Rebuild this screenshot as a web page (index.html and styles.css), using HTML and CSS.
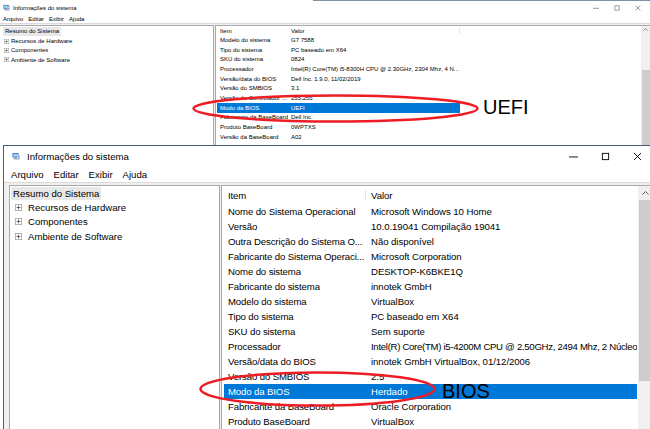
FILE: index.html
```html
<!DOCTYPE html>
<html lang="pt-BR">
<head>
<meta charset="utf-8">
<title>Informações do sistema</title>
<link rel="stylesheet" href="styles.css">
</head>
<body>
<div class="stage">

  <section class="win win-back">
    <header class="titlebar">
      <svg class="appicon" viewBox="0 0 16 16"><rect x="1" y="2" width="12" height="9" fill="#2e6bc0"/><rect x="2.5" y="3.5" width="9" height="6" fill="#9dd0f5"/><rect x="5" y="11" width="4" height="2" fill="#6a7c8f"/><rect x="3" y="13" width="8" height="1.5" fill="#6a7c8f"/><rect x="10" y="6" width="5" height="9" fill="#e9eef4" stroke="#7a8ca0" stroke-width=".8"/><rect x="12" y="8" width="1.2" height="5" fill="#2e6bc0"/></svg>
      <span class="title">Informações do sistema</span>
      <div class="controls">
        <span class="ctl"><svg viewBox="0 0 10 10"><path d="M0 5.5h10" stroke="#555" stroke-width="1"/></svg></span>
        <span class="ctl"><svg viewBox="0 0 10 10"><rect x="1.5" y="1.5" width="7" height="7" fill="none" stroke="#555" stroke-width="1"/></svg></span>
        <span class="ctl"><svg viewBox="0 0 10 10"><path d="M1 1l8 8M9 1l-8 8" stroke="#555" stroke-width="1"/></svg></span>
      </div>
    </header>
    <nav class="menubar"><span>Arquivo</span><span>Editar</span><span>Exibir</span><span>Ajuda</span></nav>
    <div class="sep"></div>
    <div class="body">
      <aside class="tree">
        <div class="node root"><span class="label">Resumo do Sistema</span></div>
        <div class="node"><svg class="exp" viewBox="0 0 9 9"><rect x=".5" y=".5" width="8" height="8" fill="#fff" stroke="#a0a0a0"/><path d="M2 4.5h5M4.5 2v5" stroke="#444"/></svg><span class="label">Recursos de Hardware</span></div>
        <div class="node"><svg class="exp" viewBox="0 0 9 9"><rect x=".5" y=".5" width="8" height="8" fill="#fff" stroke="#a0a0a0"/><path d="M2 4.5h5M4.5 2v5" stroke="#444"/></svg><span class="label">Componentes</span></div>
        <div class="node"><svg class="exp" viewBox="0 0 9 9"><rect x=".5" y=".5" width="8" height="8" fill="#fff" stroke="#a0a0a0"/><path d="M2 4.5h5M4.5 2v5" stroke="#444"/></svg><span class="label">Ambiente de Software</span></div>
      </aside>
      <div class="pane">
        <div class="list">
          <div class="row head"><span class="c1">Item</span><span class="c2">Valor</span></div>
          <div class="row"><span class="c1">Modelo do sistema</span><span class="c2">G7 7588</span></div>
          <div class="row"><span class="c1">Tipo do sistema</span><span class="c2">PC baseado em X64</span></div>
          <div class="row"><span class="c1">SKU do sistema</span><span class="c2">0824</span></div>
          <div class="row"><span class="c1">Processador</span><span class="c2">Intel(R) Core(TM) i5-8300H CPU @ 2.30GHz, 2304 Mhz, 4 N...</span></div>
          <div class="row"><span class="c1">Versão/data do BIOS</span><span class="c2">Dell Inc. 1.9.0, 11/02/2019</span></div>
          <div class="row"><span class="c1">Versão do SMBIOS</span><span class="c2">3.1</span></div>
          <div class="row"><span class="c1">Versão do Controlador ...</span><span class="c2">255.255</span></div>
          <div class="row sel"><span class="c1">Modo da BIOS</span><span class="c2">UEFI</span></div>
          <div class="row"><span class="c1">Fabricante da BaseBoard</span><span class="c2">Dell Inc.</span></div>
          <div class="row"><span class="c1">Produto BaseBoard</span><span class="c2">0WPTXS</span></div>
          <div class="row"><span class="c1">Versão da BaseBoard</span><span class="c2">A02</span></div>
        </div>
        <div class="scrollbar">
          <div class="arrow"><svg viewBox="0 0 7 4"><path d="M.5 3.5l3-3 3 3" fill="none" stroke="#606060" stroke-width="1"/></svg></div>
          <div class="track"><div class="thumb"></div></div>
        </div>
      </div>
    </div>
  </section>

  <section class="win win-front">
    <header class="titlebar">
      <svg class="appicon" viewBox="0 0 16 16"><rect x="1" y="2" width="12" height="9" fill="#2e6bc0"/><rect x="2.5" y="3.5" width="9" height="6" fill="#9dd0f5"/><rect x="5" y="11" width="4" height="2" fill="#6a7c8f"/><rect x="3" y="13" width="8" height="1.5" fill="#6a7c8f"/><rect x="10" y="6" width="5" height="9" fill="#e9eef4" stroke="#7a8ca0" stroke-width=".8"/><rect x="12" y="8" width="1.2" height="5" fill="#2e6bc0"/></svg>
      <span class="title">Informações do sistema</span>
      <div class="controls">
        <span class="ctl"><svg viewBox="0 0 10 10"><path d="M0 5.5h10" stroke="#000" stroke-width="1"/></svg></span>
        <span class="ctl"><svg viewBox="0 0 10 10"><rect x="1.5" y="1.5" width="7" height="7" fill="none" stroke="#000" stroke-width="1"/></svg></span>
        <span class="ctl"><svg viewBox="0 0 10 10"><path d="M1 1l8 8M9 1l-8 8" stroke="#000" stroke-width="1"/></svg></span>
      </div>
    </header>
    <nav class="menubar"><span>Arquivo</span><span>Editar</span><span>Exibir</span><span>Ajuda</span></nav>
    <div class="sep"></div>
    <div class="body">
      <aside class="tree">
        <div class="node root"><span class="label">Resumo do Sistema</span></div>
        <div class="node"><svg class="exp" viewBox="0 0 9 9"><rect x=".5" y=".5" width="8" height="8" fill="#fff" stroke="#a0a0a0"/><path d="M2 4.5h5M4.5 2v5" stroke="#444"/></svg><span class="label">Recursos de Hardware</span></div>
        <div class="node"><svg class="exp" viewBox="0 0 9 9"><rect x=".5" y=".5" width="8" height="8" fill="#fff" stroke="#a0a0a0"/><path d="M2 4.5h5M4.5 2v5" stroke="#444"/></svg><span class="label">Componentes</span></div>
        <div class="node"><svg class="exp" viewBox="0 0 9 9"><rect x=".5" y=".5" width="8" height="8" fill="#fff" stroke="#a0a0a0"/><path d="M2 4.5h5M4.5 2v5" stroke="#444"/></svg><span class="label">Ambiente de Software</span></div>
      </aside>
      <div class="pane">
        <div class="list">
          <div class="row head"><span class="c1">Item</span><span class="c2">Valor</span></div>
          <div class="row"><span class="c1">Nome do Sistema Operacional</span><span class="c2">Microsoft Windows 10 Home</span></div>
          <div class="row"><span class="c1">Versão</span><span class="c2">10.0.19041 Compilação 19041</span></div>
          <div class="row"><span class="c1">Outra Descrição do Sistema O...</span><span class="c2">Não disponível</span></div>
          <div class="row"><span class="c1">Fabricante do Sistema Operaci...</span><span class="c2">Microsoft Corporation</span></div>
          <div class="row"><span class="c1">Nome do sistema</span><span class="c2">DESKTOP-K6BKE1Q</span></div>
          <div class="row"><span class="c1">Fabricante do sistema</span><span class="c2">innotek GmbH</span></div>
          <div class="row"><span class="c1">Modelo do sistema</span><span class="c2">VirtualBox</span></div>
          <div class="row"><span class="c1">Tipo do sistema</span><span class="c2">PC baseado em X64</span></div>
          <div class="row"><span class="c1">SKU do sistema</span><span class="c2">Sem suporte</span></div>
          <div class="row"><span class="c1">Processador</span><span class="c2 long">Intel(R) Core(TM) i5-4200M CPU @ 2.50GHz, 2494 Mhz, 2 Núcleo</span></div>
          <div class="row"><span class="c1">Versão/data do BIOS</span><span class="c2">innotek GmbH VirtualBox, 01/12/2006</span></div>
          <div class="row"><span class="c1">Versão do SMBIOS</span><span class="c2">2.5</span></div>
          <div class="row sel"><span class="c1">Modo da BIOS</span><span class="c2">Herdado</span></div>
          <div class="row"><span class="c1">Fabricante da BaseBoard</span><span class="c2">Oracle Corporation</span></div>
          <div class="row"><span class="c1">Produto BaseBoard</span><span class="c2">VirtualBox</span></div>
        </div>
        <div class="scrollbar">
          <div class="arrow"><svg viewBox="0 0 7 4"><path d="M.5 3.5l3-3 3 3" fill="none" stroke="#606060" stroke-width="1"/></svg></div>
          <div class="track"><div class="thumb"></div></div>
        </div>
      </div>
    </div>
  </section>

  <svg class="annot" viewBox="0 0 650 429">
    <ellipse cx="335.5" cy="108.5" rx="142" ry="13" fill="none" stroke="#ee1c24" stroke-width="2.5"/>
    <ellipse cx="317.5" cy="389" rx="117" ry="16.5" fill="none" stroke="#ee1c24" stroke-width="2.5"/>
  </svg>
  <span class="tag tag-uefi">UEFI</span>
  <span class="tag tag-bios">BIOS</span>
</div>
</body>
</html>
```

FILE: styles.css
```css
* { box-sizing: border-box; margin: 0; padding: 0; }

body {
  margin: 0;
  width: 650px;
  height: 429px;
  overflow: hidden;
  background: #fff;
  font-family: "Liberation Sans", Arial, sans-serif;
  color: #000;
}

.stage {
  position: relative;
  width: 650px;
  height: 429px;
  overflow: hidden;
}

/* ---------- generic window ---------- */
.win {
  position: absolute;
  display: flex;
  flex-direction: column;
  background: #f0f0f0;
  overflow: hidden;
}
.titlebar {
  display: flex;
  align-items: center;
  background: #fff;
  flex: none;
}
.appicon { flex: none; display: block; }
.title { white-space: nowrap; }
.controls { margin-left: auto; display: flex; height: 100%; }
.ctl { display: flex; align-items: center; justify-content: center; height: 100%; }
.ctl svg { display: block; }
.menubar {
  display: flex;
  align-items: center;
  background: #fff;
  flex: none;
  white-space: nowrap;
}
.sep { flex: none; border-top: 1px solid #dadada; background: #f0f0f0; }
.body { flex: 1; display: flex; min-height: 0; }
.tree {
  flex: none;
  background: #fff;
  border: 1px solid #a9a9a9;
  white-space: nowrap;
}
.node { display: flex; align-items: center; }
.root .label { background: #e8e8e8; }
.exp { flex: none; display: block; }
.pane {
  flex: 1;
  display: flex;
  min-width: 0;
  background: #fff;
  border-left: 1px solid #a9a9a9;
  border-top: 1px solid #a9a9a9;
}
.list { flex: 1; min-width: 0; overflow: hidden; }
.row { display: flex; white-space: nowrap; }
.row .c1, .row .c2 { overflow: hidden; flex: none; }
.row .c2 { flex: 1; }
.row.sel { background: #0078d7; color: #fff; }
.scrollbar { flex: none; display: flex; flex-direction: column; background: #f0f0f0; }
.arrow { flex: none; display: flex; align-items: center; justify-content: center; }
.arrow svg { display: block; }
.track { flex: 1; position: relative; }
.thumb { background: #cdcdcd; }

/* ---------- back (small) window ---------- */
.win-back {
  left: 0;
  top: 0;
  width: 650px;
  height: 146px;
  font-size: 6px;
}
.win-back .titlebar { height: 14px; padding-left: 3px; border-top: 1px solid transparent; }
.win-back .titlebar::after {
  content: "";
  position: absolute;
  left: 313px;
  right: 0;
  top: 0;
  height: 1px;
  background: #7d93ab;
}
.win-back .appicon { width: 7px; height: 7px; margin-right: 3px; }
.win-back .ctl { width: 21px; }
.win-back .ctl svg { width: 6px; height: 6px; }
.win-back .controls { padding-right: 2px; }
.win-back .menubar { height: 9px; padding-left: 3px; gap: 5px; }
.win-back .sep { height: 2px; }
.win-back .tree { width: 214px; border-left: none; border-bottom: none; padding-top: 1px; }
.win-back .node { height: 9.4px; padding-left: 4px; gap: 2px; }
.win-back .root { padding-left: 3px; }
.win-back .root .label { padding: 0 2px; line-height: 8.5px; }
.win-back .exp { width: 5px; height: 5px; }
.win-back .pane { margin-left: 1px; }
.win-back .row { height: 9.7px; align-items: center; margin-left: 1px; width: 243px; }
.win-back .row.head { height: 9px; }
.win-back .c1 { width: 71px; padding-left: 3px; }
.win-back .c2 { padding-left: 3px; }
.win-back .head .c2 { border-right: 1px solid #e5e5e5; }
.win-back .scrollbar { width: 9px; }
.win-back .arrow { height: 7px; }
.win-back .arrow svg { width: 5px; height: 3px; }
.win-back .thumb { margin-top: 37px; height: 80px; margin-left: 1px; }

/* ---------- front (large) window ---------- */
.win-front {
  left: 3px;
  top: 145px;
  width: 650px;
  height: 290px;
  border-left: 1px solid #4a5d71;
  border-top: 1px solid #4a5d71;
  font-size: 9.6px;
}
.win-front .titlebar { height: 20px; padding-left: 8px; }
.win-front .appicon { width: 8px; height: 8px; margin-right: 7px; }
.win-front .ctl { width: 32px; }
.win-front .ctl svg { width: 9px; height: 9px; }
.win-front .menubar { height: 16px; padding-left: 7px; gap: 10px; }
.win-front .sep { height: 3px; }
.win-front .tree { width: 211px; margin-left: 5px; padding-top: 0; }
.win-front .node { height: 14.4px; padding-left: 5px; gap: 6px; }
.win-front .root { padding-left: 1px; }
.win-front .root .label { padding: 0 2px; line-height: 13px; }
.win-front .exp { width: 7px; height: 7px; }
.win-front .pane { margin-left: 1px; }
.win-front .row { height: 15px; align-items: center; margin-left: 2px; margin-right: 1px; }
.win-front .row.head { height: 18px; }
.win-front .c1 { width: 142px; padding-left: 4px; letter-spacing: -0.12px; }
.win-front .head .c1 { border-right: 1px solid #e5e5e5; }
.win-front .c2 { padding-left: 5px; letter-spacing: -0.05px; }
.win-front .c2.long { letter-spacing: -0.3px; }
.win-front .scrollbar { width: 15px; }
.win-front .arrow { height: 14px; }
.win-front .arrow svg { width: 7px; height: 4px; }
.win-front .thumb { margin-top: 0; height: 181px; margin-left: 1px; }

/* ---------- annotations ---------- */
.annot {
  position: absolute;
  left: 0;
  top: 0;
  width: 650px;
  height: 429px;
  pointer-events: none;
}
.tag {
  position: absolute;
  font-family: "Liberation Sans", Arial, sans-serif;
  font-size: 20px;
  line-height: 20px;
  color: #000;
}
.tag-uefi { left: 483px; top: 97px; }
.tag-bios { left: 442px; top: 381px; }
```
